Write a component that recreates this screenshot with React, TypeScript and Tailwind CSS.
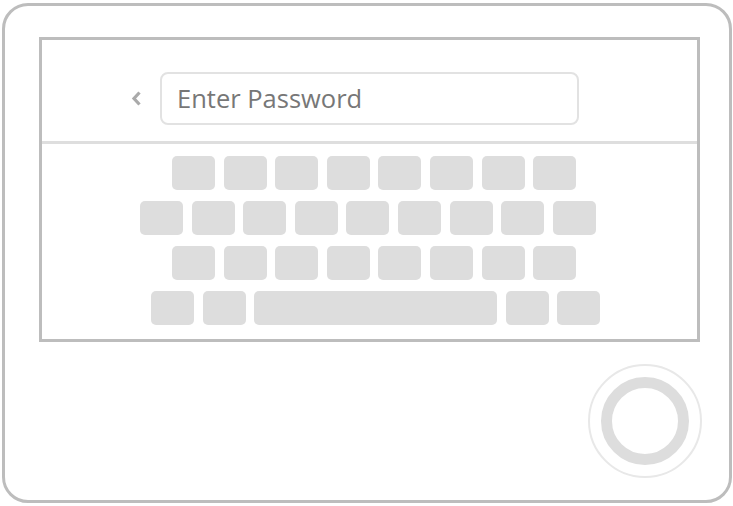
export default function App() {
  const row = (n: number) =>
    Array.from({ length: n }).map((_, i) => (
      <div key={i} className="w-[43px] h-[34px] rounded-[5px] bg-[#dddddd]" />
    ));

  return (
    <div className="w-[733px] h-[506px] bg-white pt-[3px] pl-[2px]">
      <div className="w-[730px] h-[500px] border-[3px] border-[#bdbdbd] rounded-[26px] flex flex-col">
        {/* screen */}
        <div className="mt-[31px] ml-[34px] w-[661px] h-[305px] border-[3px] border-[#bdbdbd] flex flex-col">
          <div className="flex items-center h-[53px] mt-[32px]">
            <svg
              className="ml-[89px]"
              width="10"
              height="15"
              viewBox="0 0 10 15"
            >
              <polyline
                points="8.5,1.5 3,7.5 8.5,13.5"
                fill="none"
                stroke="#aaaaaa"
                strokeWidth="3.2"
              />
            </svg>
            <div className="ml-[19px] w-[419px] h-[53px] border-2 border-[#e2e2e2] rounded-[8px] flex items-center pl-[15px]">
              <span
                className="text-[25.5px] text-[#777777]"
                style={{ fontFamily: '"Open Sans", sans-serif' }}
              >
                Enter Password
              </span>
            </div>
          </div>
          <div className="mt-[16px] h-[3px] bg-[#dedede]" />
          <div className="mt-[12px] flex flex-col gap-[11px]">
            <div className="ml-[130px] flex gap-[8.6px]">{row(8)}</div>
            <div className="ml-[98px] flex gap-[8.6px]">{row(9)}</div>
            <div className="ml-[130px] flex gap-[8.6px]">{row(8)}</div>
            <div className="ml-[109px] flex gap-[8.6px]">
              {row(2)}
              <div className="w-[243px] h-[34px] rounded-[5px] bg-[#dddddd]" />
              {row(2)}
            </div>
          </div>
        </div>
        {/* home button */}
        <div className="flex-1 flex items-center justify-end pr-[27px]">
          <div className="w-[114px] h-[114px] rounded-full border-[2.5px] border-[#e8e8e8] flex items-center justify-center">
            <div className="w-[88px] h-[88px] rounded-full border-[11px] border-[#dddddd]" />
          </div>
        </div>
      </div>
    </div>
  );
}
